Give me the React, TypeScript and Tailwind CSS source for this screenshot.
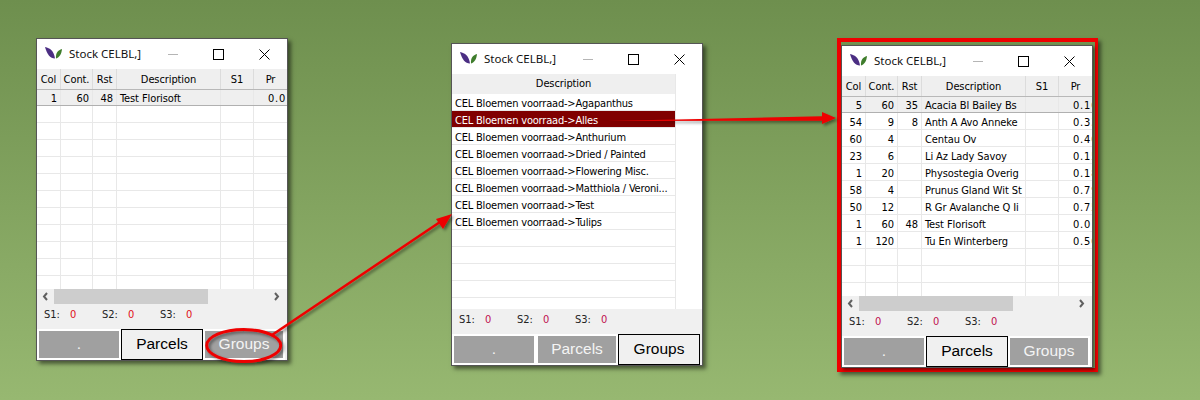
const widths = "grid-cols-[24px_32px_24px_104px_33px_33px]";

const rowsOne = [["1", "60", "48", "Test Florisoft", "", "0.01"]];
const rowsThree = [
  ["5", "60", "35", "Acacia Bl Bailey Bs", "", "0.10"],
  ["54", "9", "8", "Anth A Avo Anneke", "", "0.33"],
  ["60", "4", "", "Centau Ov", "", "0.40"],
  ["23", "6", "", "Li Az Lady Savoy", "", "0.15"],
  ["1", "20", "", "Physostegia Overig", "", "0.18"],
  ["58", "4", "", "Prunus Gland Wit St", "", "0.79"],
  ["50", "12", "", "R Gr Avalanche Q Ii", "", "0.75"],
  ["1", "60", "48", "Test Florisoft", "", "0.01"],
  ["1", "120", "", "Tu En Winterberg", "", "0.50"],
];
const groups = [
  "Agapanthus",
  "Alles",
  "Anthurium",
  "Dried / Painted",
  "Flowering Misc.",
  "Matthiola / Veroni...",
  "Test",
  "Tulips",
];

const TitleBar = () => (
  <div className="flex h-[30px] shrink-0 items-center bg-white">
    <svg width="20" height="14" viewBox="0 0 20 14" className="ml-[7px]">
      <path d="M1 0 C6 1 10 4 11 11.5 C6 11.5 3 7 1 0 Z" fill="#4b2e83" />
      <path d="M18 2 C14 3 11.5 6 12 11.5 C15.5 10.5 17.5 7 18 2 Z" fill="#3f7d2c" />
    </svg>
    <span className="ml-[5px] w-[99px] font-['Noto_Sans',sans-serif] text-[11.5px] tracking-normal text-[#111]">Stock CELBL,]</span>
    <div className="mt-[1px] h-px w-[10px] bg-[#b5b5b5]" />
    <div className="ml-[35px] h-[11px] w-[11px] border border-black" />
    <svg width="11" height="11" viewBox="0 0 11 11" className="ml-[35px]">
      <path d="M0.5 0.5 L10.5 10.5 M10.5 0.5 L0.5 10.5" stroke="#000" strokeWidth="1" fill="none" />
    </svg>
  </div>
);

const Cell = ({ text, align }: { text: string; align: string }) => (
  <div className={`overflow-hidden whitespace-nowrap border-r border-[#e8e8e8] px-[3px] last:border-r-0 ${align}`}>{text}</div>
);

const DataTable = ({ rows, selected }: { rows: string[][]; selected: number }) => {
  const filler = Array.from({ length: 14 - rows.length });
  return (
    <div className="h-0 flex-1 overflow-hidden">
      <div className={`grid h-[21px] ${widths} items-center border-b border-[#b8b8b8] bg-[#efefef] text-center`}>
        {["Col", "Cont.", "Rst", "Description", "S1", "Pr"].map((h) => (
          <div key={h} className="flex h-full items-center justify-center border-r border-[#dcdcdc] pt-[2px] last:border-r-0">
            {h}
          </div>
        ))}
      </div>
      {rows.map((r, i) => (
        <div
          key={i}
          className={`grid ${widths} items-stretch ${
            i === selected
              ? "h-[16px] border-b border-[#b0b0b0] bg-[#efefef] leading-[17px]"
              : "h-[17px] border-b border-[#e8e8e8] leading-[20px]"
          }`}
        >
          <Cell text={r[0]} align="text-right" />
          <Cell text={r[1]} align="text-right" />
          <Cell text={r[2]} align="text-right" />
          <Cell text={r[3]} align="text-left" />
          <Cell text={r[4]} align="text-left" />
          <Cell text={r[5]} align="text-left pl-[14px] pr-0 tracking-[0.8px]" />
        </div>
      ))}
      {filler.map((_, i) => (
        <div key={i} className={`grid h-[17px] ${widths} border-b border-[#e8e8e8]`}>
          {[0, 1, 2, 3, 4, 5].map((c) => (
            <div key={c} className="border-r border-[#e8e8e8] last:border-r-0" />
          ))}
        </div>
      ))}
    </div>
  );
};

const GroupList = () => (
  <div className="h-0 w-[224px] flex-1 overflow-hidden border-r border-[#e8e8e8]">
    <div className="flex h-[20px] items-center justify-center bg-[#efefef]">Description</div>
    {groups.map((g) => (
      <div
        key={g}
        className={`h-[17px] whitespace-nowrap border-b border-[#e8e8e8] pl-[3px] leading-[20px] tracking-[-0.2px] ${
          g === "Alles" ? "bg-[#800000] text-white" : ""
        }`}
      >
        CEL Bloemen voorraad-&gt;{g}
      </div>
    ))}
    {Array.from({ length: 6 }).map((_, i) => (
      <div key={i} className="h-[17px] border-b border-[#e8e8e8]" />
    ))}
  </div>
);

const ScrollBar = () => (
  <div className="flex h-[15px] shrink-0 items-center bg-[#f0f0f0]">
    <svg width="17" height="15" viewBox="0 0 17 15">
      <path d="M10 4 L7 7.5 L10 11" stroke="#606060" strokeWidth="2" fill="none" />
    </svg>
    <div className="h-[15px] w-[154px] bg-[#cdcdcd]" />
    <div className="flex-1" />
    <svg width="17" height="15" viewBox="0 0 17 15">
      <path d="M5 4 L8 7.5 L5 11" stroke="#606060" strokeWidth="2" fill="none" />
    </svg>
  </div>
);

const Totals = ({ color }: { color: string }) => (
  <div className="flex h-[25px] shrink-0 items-center bg-[#f0f0f0] pb-[2px] pl-[7px] text-[#222]">
    {["S1:", "S2:", "S3:"].map((s) => (
      <div key={s} className="flex w-[58px]">
        <span className="w-[26px]">{s}</span>
        <span className={color}>0</span>
      </div>
    ))}
  </div>
);

const Tabs = ({ active }: { active: string }) => (
  <div className="grid h-[31px] shrink-0 grid-cols-[84px_82px_82px] bg-[#f0f0f0] font-['Liberation_Sans',sans-serif] text-[15.5px] tracking-normal">
    {[".", "Parcels", "Groups"].map((t) =>
      t === active ? (
        <div key={t} className="flex items-center justify-center border border-black bg-[#f0f0f0] pb-[2px] text-black">
          {t}
        </div>
      ) : (
        <div key={t} className="flex items-center justify-center border-2 border-white bg-[#a0a0a0] pb-[2px] text-[#f4f4f4]">
          {t}
        </div>
      )
    )}
  </div>
);

const StockWindow = ({ className, children }: { className: string; children: React.ReactNode }) => (
  <div
    className={`absolute flex h-[323px] w-[252px] flex-col overflow-hidden border border-[#555] bg-white font-['DejaVu_Sans',sans-serif] text-[11px] tracking-[-0.1px] [font-stretch:condensed] text-black ${className}`}
  >
    {children}
  </div>
);

export default function App() {
  return (
    <div className="relative h-[400px] w-[1200px] overflow-hidden bg-gradient-to-b from-[#6e8f4e] to-[#97b871]">
      <StockWindow className="left-[36px] top-[38px] shadow-[3px_3px_4px_rgba(0,0,0,0.5)]">
        <TitleBar />
        <DataTable rows={rowsOne} selected={0} />
        <ScrollBar />
        <Totals color="text-[#e01020]" />
        <Tabs active="Parcels" />
      </StockWindow>

      <StockWindow className="left-[451px] top-[43px] shadow-[3px_3px_4px_rgba(0,0,0,0.5)]">
        <TitleBar />
        <GroupList />
        <Totals color="text-[#c01050]" />
        <Tabs active="Groups" />
      </StockWindow>

      <div className="absolute left-[837px] top-[38px] h-[334px] w-[261px] border-y-4 border-l-4 border-r-[3px] border-[#ee0000] shadow-[3px_3px_4px_rgba(0,0,0,0.5)]" />
      <StockWindow className="left-[841px] top-[45px] shadow-[2px_2px_3px_rgba(0,0,0,0.5)]">
        <TitleBar />
        <DataTable rows={rowsThree} selected={0} />
        <ScrollBar />
        <Totals color="text-[#c01050]" />
        <Tabs active="Parcels" />
      </StockWindow>

      <svg width="1200" height="400" viewBox="0 0 1200 400" className="pointer-events-none absolute left-0 top-0">
        <defs>
          <filter id="arrowShadow" x="-10%" y="-10%" width="120%" height="120%">
            <feDropShadow dx="2" dy="2" stdDeviation="1.5" floodColor="#000" floodOpacity="0.45" />
          </filter>
        </defs>
        <g filter="url(#arrowShadow)">
          <ellipse cx="243.7" cy="345.5" rx="37" ry="16" fill="none" stroke="#ee0000" strokeWidth="3" />
          <path d="M272 335 L440 222" stroke="#ee0000" strokeWidth="2.5" fill="none" />
          <path d="M452 214 L436 219 L443 229 Z" fill="#ee0000" />
          <path d="M608 121 L822 116.3 L822 120.7 Z" fill="#ee0000" />
          <path d="M836 118 L822 112 L822 124 Z" fill="#ee0000" />
        </g>
      </svg>
    </div>
  );
}
